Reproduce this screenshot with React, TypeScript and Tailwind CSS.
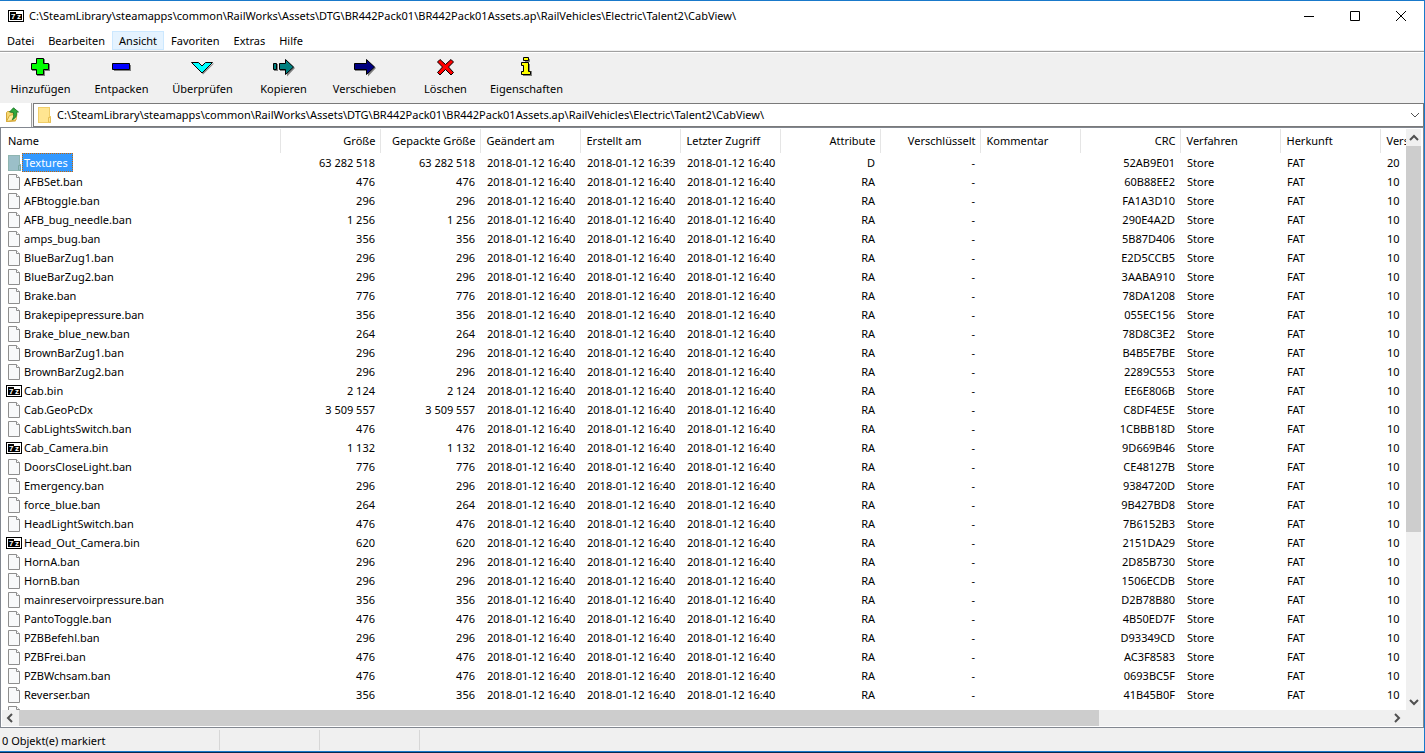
import * as React from "react";

type Entry = {
  name: string;
  size: string;
  crc: string;
  kind?: "folder" | "archive";
};

const entries: Entry[] = [
  { name: "Textures", size: "63 282 518", crc: "52AB9E01", kind: "folder" },
  { name: "AFBSet.ban", size: "476", crc: "60B88EE2" },
  { name: "AFBtoggle.ban", size: "296", crc: "FA1A3D10" },
  { name: "AFB_bug_needle.ban", size: "1 256", crc: "290E4A2D" },
  { name: "amps_bug.ban", size: "356", crc: "5B87D406" },
  { name: "BlueBarZug1.ban", size: "296", crc: "E2D5CCB5" },
  { name: "BlueBarZug2.ban", size: "296", crc: "3AABA910" },
  { name: "Brake.ban", size: "776", crc: "78DA1208" },
  { name: "Brakepipepressure.ban", size: "356", crc: "055EC156" },
  { name: "Brake_blue_new.ban", size: "264", crc: "78D8C3E2" },
  { name: "BrownBarZug1.ban", size: "296", crc: "B4B5E7BE" },
  { name: "BrownBarZug2.ban", size: "296", crc: "2289C553" },
  { name: "Cab.bin", size: "2 124", crc: "EE6E806B", kind: "archive" },
  { name: "Cab.GeoPcDx", size: "3 509 557", crc: "C8DF4E5E" },
  { name: "CabLightsSwitch.ban", size: "476", crc: "1CBBB18D" },
  { name: "Cab_Camera.bin", size: "1 132", crc: "9D669B46", kind: "archive" },
  { name: "DoorsCloseLight.ban", size: "776", crc: "CE48127B" },
  { name: "Emergency.ban", size: "296", crc: "9384720D" },
  { name: "force_blue.ban", size: "264", crc: "9B427BD8" },
  { name: "HeadLightSwitch.ban", size: "476", crc: "7B6152B3" },
  { name: "Head_Out_Camera.bin", size: "620", crc: "2151DA29", kind: "archive" },
  { name: "HornA.ban", size: "296", crc: "2D85B730" },
  { name: "HornB.ban", size: "296", crc: "1506ECDB" },
  { name: "mainreservoirpressure.ban", size: "356", crc: "D2B78B80" },
  { name: "PantoToggle.ban", size: "476", crc: "4B50ED7F" },
  { name: "PZBBefehl.ban", size: "296", crc: "D93349CD" },
  { name: "PZBFrei.ban", size: "476", crc: "AC3F8583" },
  { name: "PZBWchsam.ban", size: "476", crc: "0693BC5F" },
  { name: "Reverser.ban", size: "356", crc: "41B45B0F" },
];

const columns = [
  { label: "Größe", right: true },
  { label: "Gepackte Größe", right: true },
  { label: "Geändert am" },
  { label: "Erstellt am" },
  { label: "Letzter Zugriff" },
  { label: "Attribute", right: true },
  { label: "Verschlüsselt", right: true },
  { label: "Kommentar" },
  { label: "CRC", right: true },
  { label: "Verfahren" },
  { label: "Herkunft" },
  { label: "Version" },
];

const menus = ["Datei", "Bearbeiten", "Ansicht", "Favoriten", "Extras", "Hilfe"];

const PATH =
  "C:\\SteamLibrary\\steamapps\\common\\RailWorks\\Assets\\DTG\\BR442Pack01\\BR442Pack01Assets.ap\\RailVehicles\\Electric\\Talent2\\CabView\\";

function ArchiveIcon() {
  return (
    <svg width="16" height="12" viewBox="0 0 16 12" shapeRendering="crispEdges" className="shrink-0">
      <rect width="16" height="12" fill="#000" />
      <rect x="1" y="1" width="14" height="10" fill="#fff" />
      <rect x="2" y="2" width="6" height="8" fill="#000" />
      <rect x="8" y="4" width="6" height="6" fill="#000" />
      <g fill="#fff" fontFamily="Liberation Sans, sans-serif" fontWeight="700">
        <text x="3" y="9" fontSize="8">
          7
        </text>
        <text x="9" y="9" fontSize="8">
          z
        </text>
      </g>
    </svg>
  );
}

function FileIcon() {
  return (
    <svg width="12" height="16" viewBox="0 0 12 16" className="shrink-0">
      <path d="M.5.5h8l3 3v12H.5z" fill="#f8f9fa" stroke="#8e8e8e" />
      <path d="M8.500.5v3h3" fill="#fff" stroke="#8e8e8e" />
    </svg>
  );
}

function FolderIcon({ selected }: { selected?: boolean }) {
  return (
    <svg width="13" height="16" viewBox="0 0 13 16" className="shrink-0">
      <path d="M0 0h12v9h1v7H0z" fill={selected ? "#8fb5b1" : "#f0cd69"} />
      <path d="M1 1h10v9l-1 5H1z" fill={selected ? "#9bbfc8" : "#ffe591"} />
      <path d="M10.500 15V10.500h2v5z" fill={selected ? "#9bbfc8" : "#ffe591"} stroke={selected ? "#7ba8a4" : "#e6bf55"} />
    </svg>
  );
}

function EntryIcon({ kind }: { kind?: Entry["kind"] }) {
  if (kind === "folder") return <FolderIcon selected />;
  if (kind === "archive") return <ArchiveIcon />;
  return <FileIcon />;
}

function UpIcon() {
  return (
    <svg width="16" height="16" viewBox="0 0 16 16">
      <path d="M1.500 14.500v-9l1-1h3l1 1.500h4v8z" fill="#f6d873" stroke="#d3a73a" />
      <path d="M1.500 14.500l3-6 7.500-2-1 6.500z" fill="#fdeb9c" stroke="#d9ab3a" />
      <path
        d="M4.500 5L8.500.8 13.500 5l-2 .2c.4 3.300-.6 6-4.300 7.500 1.600-2.200 1.700-4.300 1.200-7.200z"
        fill="#2fa83a"
        stroke="#14701f"
        strokeWidth=".8"
      />
    </svg>
  );
}

const tools = [
  {
    label: "Hinzufügen",
    icon: (
      <>
        <path d="M9 3h8v5h5v7h-5v5H9v-5H4V8h5z" fill="#808080" />
        <path d="M8.500 2.500h7v5h5v6h-5v5h-7v-5h-5v-6h5z" fill="#0f0" stroke="#000" />
      </>
    ),
  },
  {
    label: "Entpacken",
    icon: (
      <>
        <path d="M5 9h17v6H5z" fill="#808080" />
        <path d="M3.500 7.500h17v6h-17z" fill="#00f" stroke="#000" />
      </>
    ),
  },
  {
    label: "Überprüfen",
    icon: (
      <>
        <path d="M13 18.500L23.500 8v-1L12 17z" fill="#808080" />
        <path d="M1.500 6.500h7l3.500 3.500 3.500-3.500h7L12 17z" fill="#0ff" stroke="#000" />
      </>
    ),
  },
  {
    label: "Kopieren",
    icon: (
      <>
        <path d="M3 8h4v7H3zM9 8h6V4l9 8-8 8.500V15H9z" fill="#808080" />
        <path d="M2.500 7.500h3v6h-3zM8.500 7.500h6v-4l8 7.500-8 7.500v-5h-6z" fill="#008080" stroke="#000" />
      </>
    ),
  },
  {
    label: "Verschieben",
    icon: (
      <>
        <path d="M3 8h12V4l9 8-8 8.500V15H3z" fill="#808080" />
        <path d="M2.500 7.500h12v-4l8 7.500-8 7.500v-5h-12z" fill="#000080" stroke="#000" />
      </>
    ),
  },
  {
    label: "Löschen",
    icon: (
      <path
        d="M7 3.500l5.500 5 5.500-5 2.500 2.500-5 5 5 5.500-2.500 2.500-5.500-5.500L7 19l-2.500-2.500 5-5.500-5-5z"
        fill="#f00"
        stroke="#000"
      />
    ),
  },
  {
    label: "Eigenschaften",
    icon: (
      <>
        <path d="M11 3h5v3h-5zM9 8h7v7h2v5H9z" fill="#808080" />
        <path d="M9.500 1.500h5v3h-5zM7.500 6.500h7v9h2v3h-9v-3h2v-6h-2z" fill="#ff0" stroke="#000" />
      </>
    ),
  },
];

function Chevron({ d, color = "#505050", width = 2 }: { d: string; color?: string; width?: number }) {
  return (
    <svg width="12" height="12" viewBox="0 0 12 12" fill="none" stroke={color} strokeWidth={width}>
      <path d={d} />
    </svg>
  );
}

function TitleBar() {
  return (
    <header className="flex h-[30px] shrink-0 items-center bg-white pl-2">
      <ArchiveIcon />
      <h1 className="ml-[5px] flex-1 truncate">{PATH}</h1>
      <button aria-label="Minimieren" className="flex h-full w-[46px] items-center justify-center">
        <svg width="10" height="10" stroke="#000">
          <path d="M0 5.500h10" />
        </svg>
      </button>
      <button aria-label="Maximieren" className="flex h-full w-[46px] items-center justify-center">
        <svg width="10" height="10" stroke="#000" fill="none">
          <path d="M.5.5h9v9h-9z" />
        </svg>
      </button>
      <button aria-label="Schließen" className="flex h-full w-[46px] items-center justify-center">
        <svg width="10" height="10" stroke="#000">
          <path d="M0 0l10 10M10 0L0 10" />
        </svg>
      </button>
    </header>
  );
}

function FileTable() {
  return (
    <table className="w-[1479px] table-fixed border-collapse">
      <colgroup>
        <col className="w-[279px]" />
        {columns.map((c) => (
          <col key={c.label} className="w-[100px]" />
        ))}
      </colgroup>
      <thead>
        <tr className="h-6">
          <th className="border-r border-[#e5e5e5] p-0 pl-[7px] text-left font-normal">Name</th>
          {columns.map((c) => (
            <th
              key={c.label}
              className={`border-r border-[#e5e5e5] p-0 font-normal ${c.right ? "pr-1 text-right" : "pl-[6px] text-left"}`}
            >
              {c.label}
            </th>
          ))}
        </tr>
      </thead>
      <tbody>
        {entries.map((e) => {
          const folder = e.kind === "folder";
          const cells = [
            e.size,
            e.size,
            "2018-01-12 16:40",
            folder ? "2018-01-12 16:39" : "2018-01-12 16:40",
            "2018-01-12 16:40",
            folder ? "D" : "RA",
            "-",
            "",
            e.crc,
            "Store",
            "FAT",
            folder ? "20" : "10",
          ];
          return (
            <tr key={e.name} className="h-[19px]">
              <td className="p-0">
                <div className="flex h-[19px] items-center pl-[5px]">
                  <span className={`flex w-4 shrink-0 ${e.kind === "archive" ? "" : "pl-[2px]"}`}>
                    <EntryIcon kind={e.kind} />
                  </span>
                  <span
                    className={
                      folder
                        ? "flex h-[19px] items-center border border-dotted border-[#cc6600] bg-[#3399ff] pr-1 pl-px text-white"
                        : "pl-[2px]"
                    }
                  >
                    {e.name}
                  </span>
                </div>
              </td>
              {cells.map((text, i) => (
                <td
                  key={columns[i].label}
                  className={columns[i].right ? "p-0 pr-[5px] text-right" : "p-0 pl-[7px] text-left"}
                >
                  {text}
                </td>
              ))}
            </tr>
          );
        })}
        <tr className="h-[19px]">
          <td className="p-0 pl-[7px]">
            <FileIcon />
          </td>
        </tr>
      </tbody>
    </table>
  );
}

export default function App() {
  const [path, setPath] = React.useState(PATH);

  return (
    <div className="flex h-screen flex-col overflow-hidden border-t border-r border-b border-[#1979ca] border-b-[#062a50] bg-[#f0f0f0] font-['Noto_Sans',sans-serif] text-[11px] leading-[18px] whitespace-nowrap text-black">
      <TitleBar />

      <nav className="flex h-[19px] shrink-0 bg-white">
        {menus.map((m) => (
          <button
            key={m}
            className={`border px-[6px] leading-[17px] ${m === "Ansicht" ? "border-[#cce8ff] bg-[#e5f3ff]" : "border-transparent"}`}
          >
            {m}
          </button>
        ))}
      </nav>

      <div className="mt-px flex h-[52px] shrink-0 border-t border-[#a0a0a0] shadow-[inset_0_1px_0_#ffffff]">
        {tools.map((t) => (
          <button key={t.label} className="flex w-[81px] flex-col items-center pt-1">
            <svg width="25" height="24" viewBox="0 0 25 24">
              {t.icon}
            </svg>
            <span>{t.label}</span>
          </button>
        ))}
      </div>

      <div className="flex h-6 shrink-0">
        <button
          aria-label="Übergeordneter Ordner"
          className="mr-px flex w-8 items-center border-r border-[#a0a0a0] bg-white pl-[5px]"
        >
          <UpIcon />
        </button>
        <div className="flex flex-1 items-center border border-[#7a7a7a] bg-white pl-1">
          <FolderIcon />
          <input
            aria-label="Pfad"
            className="ml-[6px] min-w-0 flex-1 outline-none"
            value={path}
            onChange={(e) => setPath(e.target.value)}
          />
          <button aria-label="Verlauf" className="pr-[2px]">
            <Chevron d="M2 4l4 4 4-4" width={1} />
          </button>
        </div>
      </div>

      <main className="flex min-h-0 flex-1 flex-col border border-[#828790] bg-white pt-px pb-px">
        <div className="flex min-h-0 flex-1 pr-[2px]">
          <div className="min-w-0 flex-1 overflow-hidden">
            <FileTable />
          </div>
          <div className="flex w-[15px] flex-col bg-[#f0f0f0]">
            <button aria-label="Nach oben" className="flex h-[17px] items-center justify-center">
              <Chevron d="M2 8l4-4 4 4" />
            </button>
            <div className="h-[386px] bg-[#cdcdcd]" />
            <button aria-label="Nach unten" className="mt-auto flex h-[17px] items-center justify-center">
              <Chevron d="M2 4l4 4 4-4" />
            </button>
          </div>
        </div>
        <div className="ml-px flex h-4 shrink-0 bg-[#f0f0f0] pr-[18px]">
          <button aria-label="Nach links" className="flex w-[17px] items-center justify-center">
            <Chevron d="M7 2L3 6l4 4" />
          </button>
          <div className="w-[1080px] bg-[#cdcdcd]" />
          <button aria-label="Nach rechts" className="ml-auto flex w-[17px] items-center justify-center">
            <Chevron d="M4 2l4 4-4 4" />
          </button>
        </div>
      </main>

      <footer className="flex h-6 shrink-0 border-b border-[#1979ca] pt-[2px] pb-px">
        <div className="w-[220px] border-r border-[#d7d7d7] pl-[2px] leading-[22px]">0 Objekt(e) markiert</div>
        <div className="w-[100px] border-r border-[#d7d7d7]" />
        <div className="w-[100px] border-r border-[#d7d7d7]" />
      </footer>
    </div>
  );
}
